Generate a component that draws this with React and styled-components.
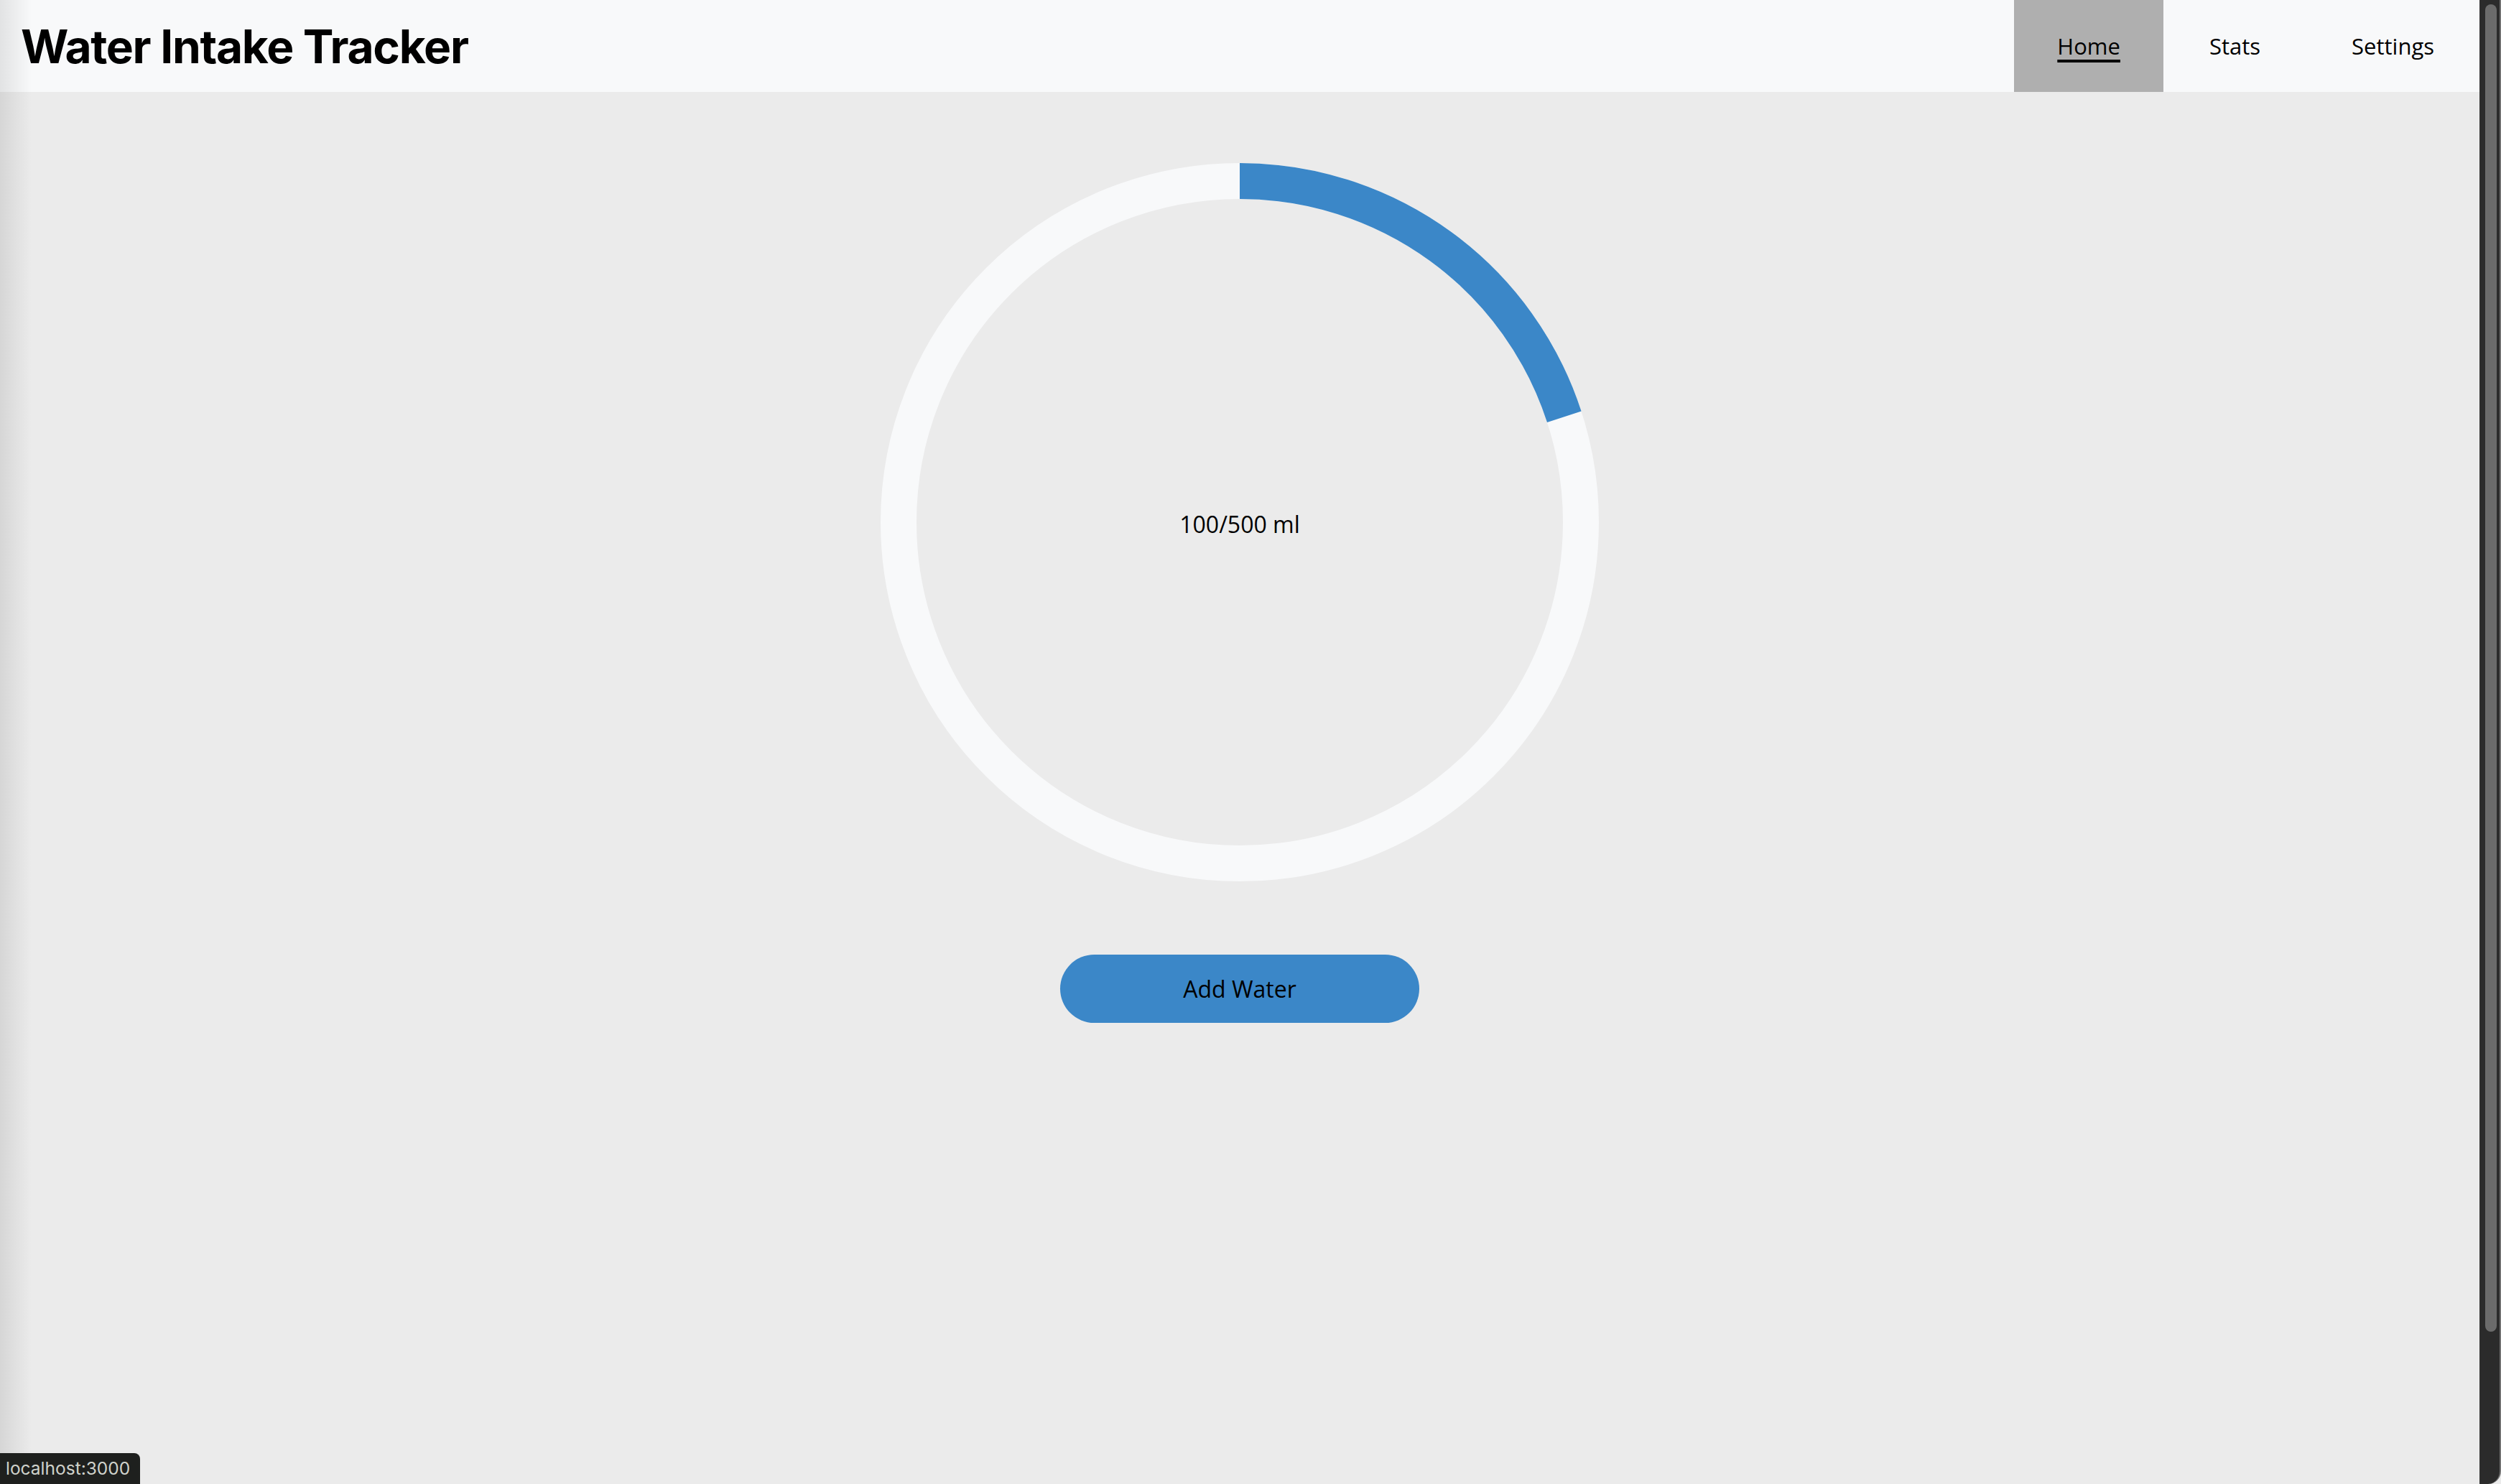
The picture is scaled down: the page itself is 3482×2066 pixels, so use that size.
import React, { useState } from "react";
import styled, { createGlobalStyle } from "styled-components";

const GlobalStyle = createGlobalStyle`
  html, body {
    margin: 0;
    padding: 0;
    height: 100%;
    overflow: hidden;
    background: #ebebeb;
  }
  #root {
    height: 100%;
  }
`;

const Shell = styled.div`
  display: flex;
  height: 100vh;
  width: 100vw;
`;

const Page = styled.div`
  position: relative;
  flex: 1;
  display: flex;
  flex-direction: column;
  background: #ebebeb;
  font-family: "Open Sans", "Noto Sans", sans-serif;

  &::before {
    content: "";
    position: absolute;
    top: 0;
    left: 0;
    bottom: 0;
    width: 44px;
    background: linear-gradient(to right, rgba(0, 0, 0, 0.09), rgba(0, 0, 0, 0));
    pointer-events: none;
    z-index: 2;
  }
`;

const Header = styled.header`
  height: 128px;
  display: flex;
  align-items: stretch;
  justify-content: space-between;
  background: #f8f9fa;
  padding: 0 0 0 29px;
`;

const Title = styled.h1`
  margin: 0;
  align-self: center;
  font-family: Inter, "Liberation Sans", sans-serif;
  font-weight: 700;
  font-size: 64px;
  letter-spacing: -1.3px;
  color: #000;
`;

const Nav = styled.nav`
  display: flex;
  align-items: stretch;
`;

const NavLink = styled.a`
  display: flex;
  align-items: center;
  padding: 0 ${(p) => p.$pad}px;
  font-size: 31px;
  color: #000;
  text-decoration: ${(p) => (p.$active ? "underline" : "none")};
  text-decoration-thickness: 4px;
  text-underline-offset: 7px;
  background: ${(p) => (p.$active ? "#afafaf" : "transparent")};
  cursor: pointer;
`;

const Main = styled.main`
  display: flex;
  flex-direction: column;
  align-items: center;
  padding-top: 99px;
  gap: 102px;
`;

const RingBox = styled.div`
  position: relative;
  width: 1000px;
  height: 1000px;
  display: flex;
  align-items: center;
  justify-content: center;
`;

const RingSvg = styled.svg`
  position: absolute;
  inset: 0;
`;

const Amount = styled.span`
  position: relative;
  top: 2px;
  font-size: 32px;
  color: #000;
`;

const AddButton = styled.button`
  width: 500px;
  height: 95px;
  border: none;
  border-radius: 48px;
  background: #3b87c8;
  color: #000;
  font-family: "Open Sans", "Noto Sans", sans-serif;
  font-size: 32px;
  cursor: pointer;
`;

const ScrollTrack = styled.div`
  width: 30px;
  background: #2b2b2b;
  border-left: 1px solid #363636;
  border-right: 2px solid #707070;
  box-sizing: border-box;
  padding: 6px 4px 0 7px;
  border-bottom-right-radius: 18px;
`;

const ScrollThumb = styled.div`
  height: 1848px;
  border-radius: 8px;
  background: #6b6b6b;
`;

const Status = styled.div`
  position: fixed;
  left: 0;
  bottom: 0;
  padding: 4px 14px 4px 8px;
  background: #1e201e;
  color: #cfd2cb;
  font-family: Inter, "Liberation Sans", sans-serif;
  font-size: 24.5px;
  line-height: 35px;
  border-top-right-radius: 8px;
  z-index: 5;
`;

const R = 475;
const C = 2 * Math.PI * R;

export default function App() {
  const [intake, setIntake] = useState(100);
  const goal = 500;
  const pct = Math.min(intake / goal, 1);

  return (
    <>
      <GlobalStyle />
      <Shell>
        <Page>
          <Header>
            <Title>Water Intake Tracker</Title>
            <Nav>
              <NavLink $active $pad={60}>Home</NavLink>
              <NavLink $pad={64}>Stats</NavLink>
              <NavLink $pad={63}>Settings</NavLink>
            </Nav>
          </Header>
          <Main>
            <RingBox>
              <RingSvg viewBox="0 0 1000 1000" width="1000" height="1000">
                <circle cx="500" cy="500" r={R} fill="none" stroke="#f8f9fa" strokeWidth="50" />
                <circle
                  cx="500"
                  cy="500"
                  r={R}
                  fill="none"
                  stroke="#3b87c8"
                  strokeWidth="50"
                  strokeDasharray={`${C * pct} ${C}`}
                  transform="rotate(-90 500 500)"
                />
              </RingSvg>
              <Amount>{intake}/{goal} ml</Amount>
            </RingBox>
            <AddButton onClick={() => setIntake(intake + 100)}>Add Water</AddButton>
          </Main>
          <Status>localhost:3000</Status>
        </Page>
        <ScrollTrack>
          <ScrollThumb />
        </ScrollTrack>
      </Shell>
    </>
  );
}
